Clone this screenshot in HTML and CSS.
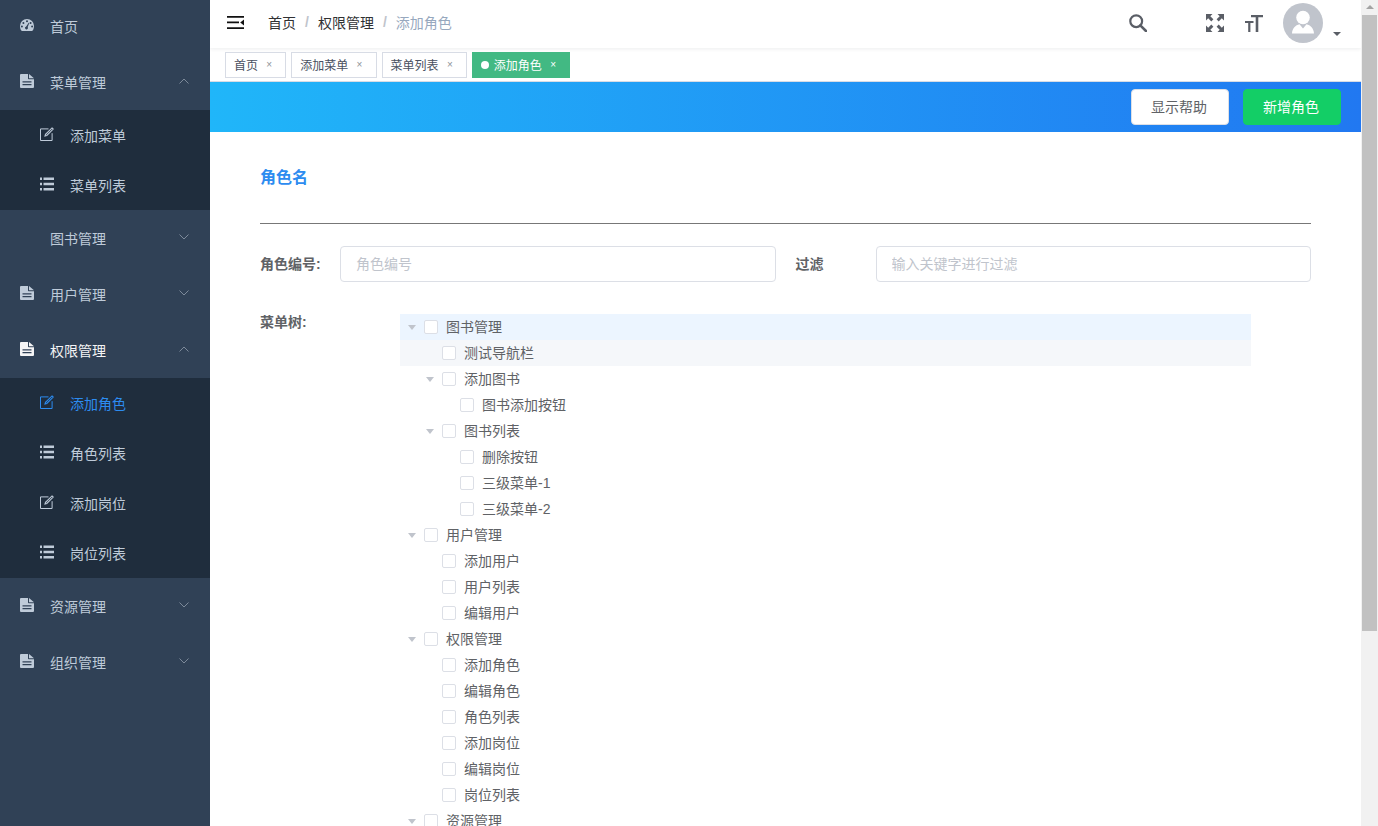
FILE: index.html
```html
<!DOCTYPE html>
<html lang="zh">
<head>
<meta charset="utf-8">
<title>添加角色</title>
<link rel="stylesheet" href="styles.css">
</head>
<body>
<svg class="sprite" width="0" height="0">
  <symbol id="i-gauge" viewBox="0 0 14 12"><path fill-rule="evenodd" d="M7 0a7 7 0 0 1 7 7c0 1.900-.5 3.400-1.300 4.600-.2.300-.4.400-.7.400H2c-.3 0-.5-.1-.7-.4C.5 10.400 0 8.900 0 7a7 7 0 0 1 7-7zM7 1.300a1 1 0 1 0 0 2 1 1 0 0 0 0-2zM3.400 2.900a1 1 0 1 0 0 2 1 1 0 0 0 0-2zM10.600 2.900a1 1 0 1 0 0 2 1 1 0 0 0 0-2zM1.900 6.500a1 1 0 1 0 0 2 1 1 0 0 0 0-2zM12.100 6.500a1 1 0 1 0 0 2 1 1 0 0 0 0-2zM8.700 3.700 6.200 7.400a1.500 1.500 0 1 0 1.500.6l1.600-4.100z"/></symbol>
  <symbol id="i-file" viewBox="0 0 14 14"><path fill-rule="evenodd" d="M1 0h7v4.500c0 .4.300.7.700.7H14V13a1 1 0 0 1-1 1H1a1 1 0 0 1-1-1V1a1 1 0 0 1 1-1zM9 0l5 4.200H9zM2.500 7.200v1.200h9V7.200zM2.500 10v1.200h9V10z"/></symbol>
  <symbol id="i-edit" viewBox="0 0 14 14"><path fill="none" stroke="currentColor" stroke-width="1" d="M8.500 1.900H.5v11.600h11.600V6.200"/><path fill="none" stroke="currentColor" stroke-width="1.100" d="M12 .9 13.200 2.100 6.800 8.500 5 9 5.500 7.300z"/></symbol>
  <symbol id="i-list" viewBox="0 0 14 14"><path d="M0 .5h2v2.400H0zM0 5.800h2v2.400H0zM0 11.100h2v2.400H0zM3.500 .5H14v2.400H3.500zM3.500 5.800H14v2.400H3.500zM3.500 11.100H14v2.400H3.500z"/></symbol>
  <symbol id="i-chev-up" viewBox="0 0 10 6"><path fill="none" stroke="currentColor" d="M.5 5.500 5 1l4.500 4.500"/></symbol>
  <symbol id="i-chev-down" viewBox="0 0 10 6"><path fill="none" stroke="currentColor" d="M.5.500 5 5 9.500.500"/></symbol>
</svg>

<div class="app">
  <aside class="sidebar">
    <a class="menu-item first"><svg class="ico gauge"><use href="#i-gauge"/></svg><span class="text">首页</span></a>

    <a class="menu-item"><svg class="ico"><use href="#i-file"/></svg><span class="text">菜单管理</span><svg class="chev"><use href="#i-chev-up"/></svg></a>
    <div class="submenu">
      <a class="sub-item"><svg class="ico"><use href="#i-edit"/></svg><span>添加菜单</span></a>
      <a class="sub-item"><svg class="ico"><use href="#i-list"/></svg><span>菜单列表</span></a>
    </div>

    <a class="menu-item"><span class="ico-blank"></span><span class="text">图书管理</span><svg class="chev"><use href="#i-chev-down"/></svg></a>
    <a class="menu-item"><svg class="ico"><use href="#i-file"/></svg><span class="text">用户管理</span><svg class="chev"><use href="#i-chev-down"/></svg></a>

    <a class="menu-item open"><svg class="ico"><use href="#i-file"/></svg><span class="text">权限管理</span><svg class="chev"><use href="#i-chev-up"/></svg></a>
    <div class="submenu">
      <a class="sub-item active"><svg class="ico"><use href="#i-edit"/></svg><span>添加角色</span></a>
      <a class="sub-item"><svg class="ico"><use href="#i-list"/></svg><span>角色列表</span></a>
      <a class="sub-item"><svg class="ico"><use href="#i-edit"/></svg><span>添加岗位</span></a>
      <a class="sub-item"><svg class="ico"><use href="#i-list"/></svg><span>岗位列表</span></a>
    </div>

    <a class="menu-item"><svg class="ico"><use href="#i-file"/></svg><span class="text">资源管理</span><svg class="chev"><use href="#i-chev-down"/></svg></a>
    <a class="menu-item"><svg class="ico"><use href="#i-file"/></svg><span class="text">组织管理</span><svg class="chev"><use href="#i-chev-down"/></svg></a>
  </aside>

  <main class="main">
    <header class="navbar">
      <svg class="hamburger" viewBox="0 0 17 13"><path d="M0 0h17v1.700H0zM0 5.600h12v1.700H0zM0 11.300h17V13H0z"/><path d="M17 3.500v6l-3.800-3z"/></svg>
      <nav class="crumbs">
        <span>首页</span><i>/</i><span>权限管理</span><i>/</i><span class="current">添加角色</span>
      </nav>
      <div class="nav-right">
        <svg class="nav-ico search" viewBox="0 0 18 18"><circle cx="7.200" cy="7.200" r="5.900" fill="none" stroke="currentColor" stroke-width="2.200"/><path d="M11.300 11.300 17 17" stroke="currentColor" stroke-width="2.600" stroke-linecap="round"/></svg>
        <svg class="nav-ico full" viewBox="0 0 18 18"><path d="M0 0h6.500L4.300 2.200 7.400 5.300 5.300 7.400 2.200 4.300 0 6.500zM18 0v6.500l-2.200-2.200-3.100 3.100-2.100-2.100 3.100-3.100L11.500 0zM0 18v-6.500l2.200 2.200 3.100-3.100 2.100 2.100-3.100 3.100 2.200 2.200zM18 18h-6.500l2.200-2.200-3.100-3.100 2.100-2.100 3.100 3.100 2.200-2.200z"/></svg>
        <svg class="nav-ico size" viewBox="0 0 18 18"><path d="M6 1h12v2.200h-4.700V18h-2.600V3.200H6zM0 7h8.500v2H5.400v9H3.200V9H0z"/></svg>
        <div class="avatar">
          <svg viewBox="0 0 40 40"><circle cx="20" cy="14.500" r="6.800" fill="#fff"/><path fill="#fff" d="M9 30.500c.3-5.500 3.500-8.300 7.500-9.300l3.500 4.300 3.500-4.300c4 1 7.200 3.800 7.500 9.300z"/></svg>
        </div>
        <span class="caret"></span>
      </div>
    </header>

    <div class="tags">
      <span class="tag">首页<b>×</b></span>
      <span class="tag">添加菜单<b>×</b></span>
      <span class="tag">菜单列表<b>×</b></span>
      <span class="tag active"><em></em>添加角色<b>×</b></span>
    </div>

    <div class="banner">
      <button class="btn">显示帮助</button>
      <button class="btn success">新增角色</button>
    </div>

    <section class="content">
      <h2 class="title">角色名</h2>
      <hr class="rule">
      <div class="field-row">
        <label class="label">角色编号:</label>
        <input class="input" placeholder="角色编号">
        <label class="label filter">过滤</label>
        <input class="input" placeholder="输入关键字进行过滤">
      </div>
      <div class="tree-row">
        <label class="label tree-label">菜单树:</label>
        <div class="tree">
          <div class="node hover"><i class="arrow"></i><i class="check"></i><span>图书管理</span></div>
          <div class="node l1 soft"><i class="arrow none"></i><i class="check"></i><span>测试导航栏</span></div>
          <div class="node l1"><i class="arrow"></i><i class="check"></i><span>添加图书</span></div>
          <div class="node l2"><i class="arrow none"></i><i class="check"></i><span>图书添加按钮</span></div>
          <div class="node l1"><i class="arrow"></i><i class="check"></i><span>图书列表</span></div>
          <div class="node l2"><i class="arrow none"></i><i class="check"></i><span>删除按钮</span></div>
          <div class="node l2"><i class="arrow none"></i><i class="check"></i><span>三级菜单-1</span></div>
          <div class="node l2"><i class="arrow none"></i><i class="check"></i><span>三级菜单-2</span></div>
          <div class="node"><i class="arrow"></i><i class="check"></i><span>用户管理</span></div>
          <div class="node l1"><i class="arrow none"></i><i class="check"></i><span>添加用户</span></div>
          <div class="node l1"><i class="arrow none"></i><i class="check"></i><span>用户列表</span></div>
          <div class="node l1"><i class="arrow none"></i><i class="check"></i><span>编辑用户</span></div>
          <div class="node"><i class="arrow"></i><i class="check"></i><span>权限管理</span></div>
          <div class="node l1"><i class="arrow none"></i><i class="check"></i><span>添加角色</span></div>
          <div class="node l1"><i class="arrow none"></i><i class="check"></i><span>编辑角色</span></div>
          <div class="node l1"><i class="arrow none"></i><i class="check"></i><span>角色列表</span></div>
          <div class="node l1"><i class="arrow none"></i><i class="check"></i><span>添加岗位</span></div>
          <div class="node l1"><i class="arrow none"></i><i class="check"></i><span>编辑岗位</span></div>
          <div class="node l1"><i class="arrow none"></i><i class="check"></i><span>岗位列表</span></div>
          <div class="node"><i class="arrow"></i><i class="check"></i><span>资源管理</span></div>
        </div>
      </div>
    </section>
  </main>

  <div class="scrollbar">
    <span class="sb-up"></span>
    <span class="sb-thumb"></span>
  </div>
</div>
</body>
</html>
```
FILE: styles.css
```css
* { box-sizing: border-box; }
html, body { margin: 0; height: 100%; overflow: hidden; }
body {
  font-family: "Liberation Sans", "Noto Sans CJK SC", sans-serif;
  font-size: 14px;
  color: #606266;
  background: #fff;
}
.sprite { position: absolute; }
.app { display: flex; height: 826px; overflow: hidden; }

/* sidebar */
.sidebar { width: 210px; flex: none; background: #304156; color: #bfcbd9; overflow: hidden; }
.menu-item {
  display: flex; align-items: center; height: 56px; padding-left: 20px; padding-right: 21px;
}
.menu-item.first { margin-top: -2px; }
.menu-item.open { color: #f4f4f5; }
.text { flex: 1; }
.ico { width: 14px; height: 14px; margin-right: 16px; fill: currentColor; flex: none; color: #bfcbd9; margin-top: -2px; }
.open .ico { color: #f4f4f5; }
.gauge { height: 12px; margin-top: -2px; }
.ico-blank { width: 30px; flex: none; }
.chev { width: 10px; height: 6px; color: #7d8a9a; flex: none; margin-top: -3px; }
.submenu { background: #1f2d3d; }
.sub-item { display: flex; align-items: center; height: 50px; padding-left: 40px; }
.sub-item.active, .sub-item.active .ico { color: #2d8cf0; }

/* top */
.main { flex: 1; min-width: 0; overflow: hidden; display: flex; flex-direction: column; }
.navbar {
  flex: none; display: flex; align-items: center; height: 48px; padding-left: 17px;
  box-shadow: 0 1px 4px rgba(0, 21, 41, .08); position: relative;
}
.hamburger { width: 17px; height: 13px; fill: #111; margin-top: -3px; }
.crumbs { margin-left: 24px; color: #303133; display: flex; align-items: center; margin-top: -5px; }
.crumbs i { font-style: normal; margin: 0 9px; color: #c0c4cc; font-weight: 700; }
.crumbs .current { color: #97a8be; }
.nav-right { margin-left: auto; display: flex; align-items: center; margin-top: -2px; }
.nav-ico { width: 18px; height: 18px; fill: #5a5e66; color: #5a5e66; display: block; }
.search { margin-right: 59px; margin-top: 0; }
.full { margin-right: 21px; }
.size { margin-right: 20px; }
.avatar { width: 40px; height: 40px; border-radius: 50%; background: #c0c4cc; }
.avatar svg { display: block; width: 40px; height: 40px; }
.caret {
  width: 0; height: 0; margin: 22px 20px 0 10px;
  border-left: 4px solid transparent; border-right: 4px solid transparent; border-top: 4px solid #5a5e66;
}
.tags {
  flex: none; display: flex; gap: 5px; height: 33px; margin-top: 1px; padding: 3px 0 0 15px;
  border-bottom: 1px solid #d8dce5;
}
.tag {
  display: flex; align-items: center; height: 26px; padding: 0 8px 1px; border: 1px solid #d8dce5;
  font-size: 12px; color: #495060; background: #fff;
}
.tag b { width: 16px; margin-left: 3.25px; text-align: center; font-weight: 400; font-size: 10px; color: #8f9399; }
.tag.active { background: #42b983; border-color: #42b983; color: #fff; }
.tag.active b { color: #fff; }
.tag em { width: 8px; height: 8px; border-radius: 50%; background: #fff; margin-right: 5px; }
.banner {
  flex: none; display: flex; justify-content: flex-end; align-items: center; gap: 14px; height: 50px; padding: 0 20px 1px 0;
  background: linear-gradient(90deg, #20b6f9 0%, #2178f1 100%);
}
.btn {
  width: 98px; height: 36px; padding: 0 2px 2px 0; font: inherit; color: #606266; background: #fff; border: 1px solid #dcdfe6; border-radius: 4px;
}
.btn.success { background: #13ce66; border-color: #13ce66; color: #fff; }

/* form */
.content { padding: 31px 50px 0; }
.title { margin: 0; font-size: 16px; line-height: 30px; font-weight: 700; color: #2d8cf0; }
.rule { margin: 30px 0 22px; border: 0; border-top: 1px solid #777; }
.field-row { display: flex; align-items: center; }
.label { font-weight: 700; color: #606266; }
.field-row .label { width: 80px; flex: none; padding-bottom: 2px; }
.field-row .filter { margin-left: 20px; }
.input {
  flex: 1; min-width: 0; height: 36px; padding: 0 15px; font: inherit; color: #606266;
  border: 1px solid #dcdfe6; border-radius: 4px; outline: 0;
}
.input::placeholder { color: #c0c4cc; opacity: 1; }
.tree-row { display: flex; margin-top: 32px; }
.tree-label { width: 140px; flex: none; line-height: 16px; }
.tree { width: 851px; }
.node { display: flex; align-items: center; height: 26px; color: #606266; white-space: nowrap; }
.node span { margin-top: -2px; }
.node.hover { background: #ecf5ff; }
.node.soft { background: #f5f7fa; }
.node.l1 { padding-left: 18px; }
.node.l2 { padding-left: 36px; }
.arrow {
  flex: none; width: 24px; height: 0; position: relative;
}
.arrow::before {
  content: ""; position: absolute; left: 8px; top: -2px; width: 0; height: 0;
  border-left: 4px solid transparent; border-right: 4px solid transparent; border-top: 5px solid #c0c4cc;
}
.arrow.none::before { display: none; }
.check { flex: none; width: 14px; height: 14px; margin-right: 8px; background: #fff; border: 1px solid #dcdfe6; border-radius: 2px; }

/* scrollbar */
.scrollbar { width: 17px; flex: none; background: #f1f1f1; display: flex; flex-direction: column; align-items: center; }
.sb-up {
  width: 0; height: 0; margin-top: 5px;
  border-left: 4px solid transparent; border-right: 4px solid transparent; border-bottom: 4px solid #a3a3a3;
}
.sb-thumb { width: 15px; height: 616px; margin-top: 6px; background: #c1c1c1; }
```
